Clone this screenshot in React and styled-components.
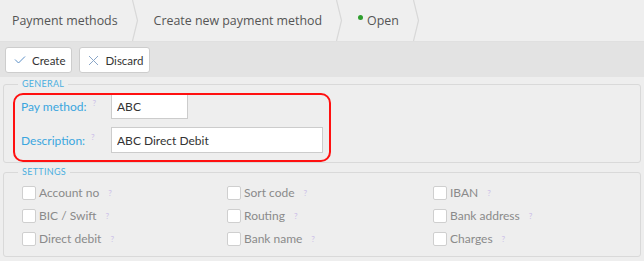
import styled, { createGlobalStyle } from "styled-components";

const GlobalStyle = createGlobalStyle`
  html, body {
    margin: 0;
    padding: 0;
    background: #eeeeee;
  }
  body {
    font-family: Lato, "Open Sans", sans-serif;
    color: #333;
  }
`;

const Page = styled.div`
  width: 644px;
  height: 261px;
  background: #eeeeee;
  overflow: hidden;
`;

const Breadcrumbs = styled.div`
  height: 41px;
  display: flex;
  align-items: stretch;
  background: #efefef;
  border-bottom: 1px solid #e0e0e0;
`;

const Crumb = styled.div`
  display: flex;
  align-items: center;
  gap: 4px;
  padding: 0 14px 0 ${(p) => (p.$first ? 12 : 15)}px;
  font-family: "Open Sans", sans-serif;
  font-size: 12.4px;
  color: #555;
  white-space: nowrap;
`;

const StatusDot = styled.span`
  width: 5px;
  height: 5px;
  border-radius: 50%;
  background: #2e9e2e;
  margin-top: -6px;
`;

const Chevron = () => (
  <svg width="7" height="41" viewBox="0 0 7 41">
    <path d="M0.5 0 L5.5 20.5 L0.5 41" fill="none" stroke="#d8d8d8" strokeWidth="1.2" />
  </svg>
);

const Toolbar = styled.div`
  height: 35px;
  background: #e3e3e3;
  display: flex;
  align-items: center;
  gap: 7px;
  padding: 0 5px;
`;

const Button = styled.button`
  height: 26px;
  display: flex;
  align-items: center;
  gap: 6px;
  padding: 0 6px 0 8px;
  background: #fff;
  border: 1px solid #cdcdcd;
  border-radius: 3px;
  font-family: Lato, sans-serif;
  font-size: 11.5px;
  color: #333;
  margin-top: 1px;
`;

const Content = styled.div`
  padding: 2px 3px 0 3px;
  display: flex;
  flex-direction: column;
  gap: 4px;
`;

const Fieldset = styled.fieldset`
  margin: 0;
  border: 1px solid #d9d9d9;
  border-radius: 3px;
  padding: 0 0 5px 0;
  min-width: 0;
  position: relative;
`;

const Legend = styled.legend`
  margin-left: 14px;
  padding: 0 4px;
  font-size: 9px;
  line-height: 10px;
  color: #4aaee0;
  text-transform: uppercase;
  letter-spacing: 0.3px;
`;

const FormRow = styled.div`
  display: flex;
  align-items: center;
  height: 34px;
  padding-left: 17px;
`;

const FieldLabel = styled.label`
  width: 90px;
  font-size: 12px;
  color: #3aa6df;
`;

const Hint = styled.sup`
  font-size: 8px;
  color: #cbbde8;
  margin-left: 6px;
`;

const TextInput = styled.input`
  box-sizing: border-box;
  width: ${(p) => p.$width}px;
  height: 26px;
  border: 1px solid #ccc;
  background: #fff;
  padding: 0 5px;
  font-family: Lato, sans-serif;
  font-size: 12px;
  color: #333;
  outline: none;
`;

const Highlight = styled.div`
  position: absolute;
  left: 9px;
  top: 4px;
  width: 314px;
  height: 65px;
  border: 2px solid #ff1010;
  border-radius: 10px;
  pointer-events: none;
`;

const SettingsGrid = styled.div`
  display: grid;
  grid-template-columns: 205px 206px 1fr;
  padding: 4px 0 1px 18px;
`;

const CheckItem = styled.label`
  display: flex;
  align-items: center;
  height: 23px;
  gap: 3px;
  font-size: 12px;
  color: #8a8a8a;
`;

const Box = styled.span`
  width: 12px;
  height: 12px;
  background: #fff;
  border: 1px solid #cfcfcf;
  border-radius: 2px;
`;

const settings = [
  "Account no",
  "Sort code",
  "IBAN",
  "BIC / Swift",
  "Routing",
  "Bank address",
  "Direct debit",
  "Bank name",
  "Charges",
];

const CheckIcon = () => (
  <svg width="12" height="10" viewBox="0 0 12 10">
    <path d="M1 4.5 L4.5 8 L11 1.5" fill="none" stroke="#5b8fc7" strokeWidth="1" />
  </svg>
);

const CrossIcon = () => (
  <svg width="11" height="11" viewBox="0 0 11 11">
    <path d="M1 1 L10 10 M10 1 L1 10" fill="none" stroke="#8aa6c8" strokeWidth="1" />
  </svg>
);

export default function App() {
  return (
    <Page>
      <GlobalStyle />
      <Breadcrumbs>
        <Crumb $first>Payment methods</Crumb>
        <Chevron />
        <Crumb>Create new payment method</Crumb>
        <Chevron />
        <Crumb>
          <StatusDot />
          Open
        </Crumb>
        <Chevron />
      </Breadcrumbs>
      <Toolbar>
        <Button>
          <CheckIcon />
          Create
        </Button>
        <Button>
          <CrossIcon />
          Discard
        </Button>
      </Toolbar>
      <Content>
        <Fieldset>
          <Legend>General</Legend>
          <FormRow>
            <FieldLabel>
              Pay method:<Hint>?</Hint>
            </FieldLabel>
            <TextInput $width={77} defaultValue="ABC" />
          </FormRow>
          <FormRow>
            <FieldLabel>
              Description:<Hint>?</Hint>
            </FieldLabel>
            <TextInput $width={212} defaultValue="ABC Direct Debit" />
          </FormRow>
          <Highlight />
        </Fieldset>
        <Fieldset>
          <Legend>Settings</Legend>
          <SettingsGrid>
            {settings.map((s) => (
              <CheckItem key={s}>
                <Box />
                {s}
                <Hint>?</Hint>
              </CheckItem>
            ))}
          </SettingsGrid>
        </Fieldset>
      </Content>
    </Page>
  );
}
